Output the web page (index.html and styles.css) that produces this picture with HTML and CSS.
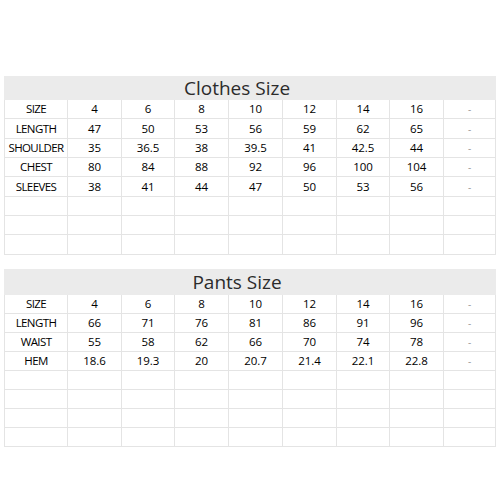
FILE: index.html
```html
<!DOCTYPE html>
<html>
<head>
<meta charset="utf-8">
<link rel="stylesheet" href="styles.css">
</head>
<body>
<div class="page">
  <table class="chart chart-clothes">
    <colgroup>
      <col class="c-label"><col class="c-a"><col class="c-b"><col class="c-a"><col class="c-a"><col class="c-a"><col class="c-b"><col class="c-a"><col class="c-last">
    </colgroup>
    <thead>
      <tr class="title-row"><th colspan="9">Clothes Size</th></tr>
    </thead>
    <tbody>
      <tr><td class="label">SIZE</td><td>4</td><td>6</td><td>8</td><td>10</td><td>12</td><td>14</td><td>16</td><td class="dash">-</td></tr>
      <tr><td class="label">LENGTH</td><td>47</td><td>50</td><td>53</td><td>56</td><td>59</td><td>62</td><td>65</td><td class="dash">-</td></tr>
      <tr><td class="label">SHOULDER</td><td>35</td><td>36.5</td><td>38</td><td>39.5</td><td>41</td><td>42.5</td><td>44</td><td class="dash">-</td></tr>
      <tr><td class="label">CHEST</td><td>80</td><td>84</td><td>88</td><td>92</td><td>96</td><td>100</td><td>104</td><td class="dash">-</td></tr>
      <tr><td class="label">SLEEVES</td><td>38</td><td>41</td><td>44</td><td>47</td><td>50</td><td>53</td><td>56</td><td class="dash">-</td></tr>
      <tr><td></td><td></td><td></td><td></td><td></td><td></td><td></td><td></td><td></td></tr>
      <tr><td></td><td></td><td></td><td></td><td></td><td></td><td></td><td></td><td></td></tr>
      <tr><td></td><td></td><td></td><td></td><td></td><td></td><td></td><td></td><td></td></tr>
    </tbody>
  </table>

  <table class="chart chart-pants">
    <colgroup>
      <col class="c-label"><col class="c-a"><col class="c-b"><col class="c-a"><col class="c-a"><col class="c-a"><col class="c-b"><col class="c-a"><col class="c-last">
    </colgroup>
    <thead>
      <tr class="title-row"><th colspan="9">Pants Size</th></tr>
    </thead>
    <tbody>
      <tr><td class="label">SIZE</td><td>4</td><td>6</td><td>8</td><td>10</td><td>12</td><td>14</td><td>16</td><td class="dash">-</td></tr>
      <tr><td class="label">LENGTH</td><td>66</td><td>71</td><td>76</td><td>81</td><td>86</td><td>91</td><td>96</td><td class="dash">-</td></tr>
      <tr><td class="label">WAIST</td><td>55</td><td>58</td><td>62</td><td>66</td><td>70</td><td>74</td><td>78</td><td class="dash">-</td></tr>
      <tr><td class="label">HEM</td><td>18.6</td><td>19.3</td><td>20</td><td>20.7</td><td>21.4</td><td>22.1</td><td>22.8</td><td class="dash">-</td></tr>
      <tr><td></td><td></td><td></td><td></td><td></td><td></td><td></td><td></td><td></td></tr>
      <tr><td></td><td></td><td></td><td></td><td></td><td></td><td></td><td></td><td></td></tr>
      <tr><td></td><td></td><td></td><td></td><td></td><td></td><td></td><td></td><td></td></tr>
      <tr><td></td><td></td><td></td><td></td><td></td><td></td><td></td><td></td><td></td></tr>
    </tbody>
  </table>
</div>
</body>
</html>
```

FILE: styles.css
```css
html, body {
  margin: 0;
  padding: 0;
  background: #ffffff;
}

.page {
  width: 500px;
  height: 500px;
  padding: 76px 5px 0 4px;
  box-sizing: border-box;
  font-family: "Open Sans", "DejaVu Sans", sans-serif;
}

.chart {
  width: 491px;
  border-collapse: collapse;
  table-layout: fixed;
}

.chart-pants {
  margin-top: 14px;
}

.c-label { width: 63px; }
.c-a { width: 54px; }
.c-b { width: 53px; }
.c-last { width: 52px; }

.title-row th {
  height: 22px;
  padding: 0 26px 0 0;
  background: #ebebeb;
  color: #2b2b2b;
  font-weight: 400;
  font-size: 19px;
  line-height: 22px;
  text-align: center;
  border: 1px solid #ebebeb;
}

.chart-pants .title-row th {
  height: 24px;
  line-height: 24px;
}

.chart td {
  height: 18.35px;
  padding: 0;
  border: 1px solid #e4e4e4;
  font-size: 11.5px;
  line-height: 18px;
  text-align: center;
  color: #000000;
  white-space: nowrap;
}

.chart-pants td {
  height: 18.05px;
}

.chart td.label {
  letter-spacing: -0.6px;
}

.chart td.dash {
  color: #9a9a9a;
  font-size: 10px;
}
```
